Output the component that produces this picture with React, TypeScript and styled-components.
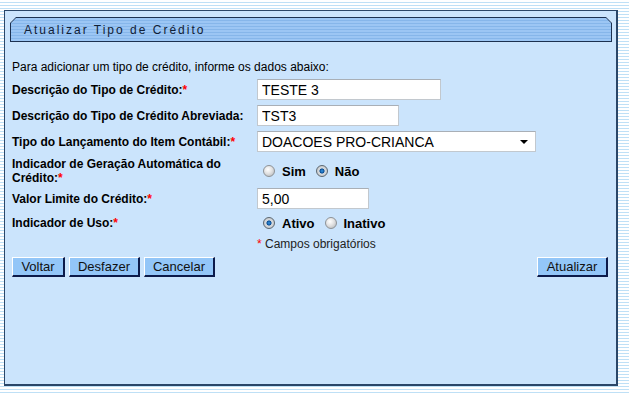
import React from "react";
import styled, { createGlobalStyle } from "styled-components";

const GlobalStyle = createGlobalStyle`
  html, body {
    margin: 0;
    padding: 0;
  }
  body {
    width: 629px;
    height: 394px;
    overflow: hidden;
    font-family: "Liberation Sans", Arial, sans-serif;
    background: repeating-linear-gradient(
      to bottom,
      #ffffff 0px,
      #ffffff 2px,
      #bfe0f6 2px,
      #bfe0f6 3px
    );
  }
`;

const Page = styled.div`
  padding: 10px 0 0 4px;
`;

const Panel = styled.div`
  box-sizing: border-box;
  width: 614px;
  height: 376px;
  background: #cbe4fc;
  border: 1px solid #2a4668;
  border-width: 1px 2px 2px 1px;
  padding: 6px 4px 0 5px;
`;

const TitleBar = styled.div`
  height: 25px;
  padding: 1px;
  box-sizing: border-box;
  background: #1c3150;
  clip-path: polygon(6px 0, calc(100% - 6px) 0, 100% 6px, 100% 100%, 0 100%, 0 6px);
`;

const TitleFill = styled.div`
  height: 100%;
  display: flex;
  align-items: center;
  padding-left: 13px;
  background: repeating-linear-gradient(
    to bottom,
    #9cc6f4 0px,
    #9cc6f4 2px,
    #86b6ea 2px,
    #86b6ea 3px
  );
  clip-path: polygon(5px 0, calc(100% - 5px) 0, 100% 5px, 100% 100%, 0 100%, 0 5px);
`;

const Title = styled.span`
  font-size: 12px;
  letter-spacing: 2px;
  color: #102036;
  margin-top: 1px;
`;

const Form = styled.div`
  display: flex;
  flex-direction: column;
  gap: 5px;
  padding: 18px 0 0 2px;
`;

const Intro = styled.div`
  font-size: 12px;
  line-height: 14px;
  color: #000;
`;

const Row = styled.div<{ h: number }>`
  display: grid;
  grid-template-columns: 245px 1fr;
  align-items: center;
  height: ${(p) => p.h}px;
`;

const Label = styled.div`
  font-size: 12px;
  font-weight: bold;
  line-height: 14px;
  color: #000;
`;

const Req = styled.span`
  color: #ff0000;
`;

const TextInput = styled.input<{ w: number }>`
  box-sizing: border-box;
  width: ${(p) => p.w}px;
  height: 21px;
  border: 1px solid #c2c8ce;
  border-top-color: #a9afb6;
  background: #fff;
  font-family: "Liberation Sans", Arial, sans-serif;
  font-size: 14px;
  color: #000;
  padding: 0 4px;
  outline: none;
`;

const SelectWrap = styled.div`
  position: relative;
  width: 279px;
  height: 21px;

  &::after {
    content: "";
    position: absolute;
    right: 8px;
    top: 9px;
    border-left: 4px solid transparent;
    border-right: 4px solid transparent;
    border-top: 4px solid #000;
    pointer-events: none;
  }
`;

const Select = styled.select`
  appearance: none;
  box-sizing: border-box;
  width: 100%;
  height: 100%;
  border: 1px solid #c2c8ce;
  border-top-color: #a9afb6;
  border-radius: 0;
  background: #fff;
  font-family: "Liberation Sans", Arial, sans-serif;
  font-size: 14px;
  color: #000;
  padding: 0 4px;
  outline: none;
`;

const RadioGroup = styled.div`
  display: flex;
  align-items: center;
  padding-left: 6px;
`;

const RadioLabel = styled.label`
  display: flex;
  align-items: center;
  gap: 7px;
  margin-right: 10px;
  font-size: 13px;
  font-weight: bold;
  color: #000;
`;

const Radio = styled.input`
  appearance: none;
  margin: 0;
  width: 12px;
  height: 12px;
  border-radius: 50%;
  border: 1px solid #8e9296;
  background: radial-gradient(circle at 40% 35%, #ffffff 0%, #e2e2e2 45%, #aeb2b6 100%);
  box-sizing: border-box;

  &:checked {
    border-color: #5d6770;
    background: radial-gradient(circle at 50% 50%, #3a9ae6 0%, #0a4e96 30%, #d8dbde 42%, #b8bcc0 100%);
  }
`;

const Note = styled.div`
  display: grid;
  grid-template-columns: 245px 1fr;
  font-size: 12px;
  line-height: 14px;
  color: #222;
`;

const NoteText = styled.span`
  grid-column: 2;
`;

const ButtonBar = styled.div`
  display: flex;
  align-items: center;
  margin-top: 1px;
  padding-right: 4px;
`;

const ButtonGroup = styled.div`
  display: flex;
  gap: 4px;
`;

const Spacer = styled.div`
  flex: 1;
`;

const Button = styled.button<{ w: number }>`
  box-sizing: border-box;
  width: ${(p) => p.w}px;
  height: 20px;
  padding: 0;
  background: #93c6f8;
  border-style: solid;
  border-width: 1px 2px 2px 1px;
  border-color: #ffffff #0c1a4a #0c1a4a #ffffff;
  font-family: "Liberation Sans", Arial, sans-serif;
  font-size: 13px;
  color: #111;
  line-height: 16px;
`;

export default function App() {
  return (
    <>
      <GlobalStyle />
      <Page>
        <Panel>
          <TitleBar>
            <TitleFill>
              <Title>Atualizar Tipo de Crédito</Title>
            </TitleFill>
          </TitleBar>
          <Form>
            <Intro>Para adicionar um tipo de crédito, informe os dados abaixo:</Intro>
            <Row h={21}>
              <Label>
                Descrição do Tipo de Crédito:<Req>*</Req>
              </Label>
              <TextInput w={184} defaultValue="TESTE 3" />
            </Row>
            <Row h={21}>
              <Label>Descrição do Tipo de Crédito Abreviada:</Label>
              <TextInput w={142} defaultValue="TST3" />
            </Row>
            <Row h={21}>
              <Label>
                Tipo do Lançamento do Item Contábil:<Req>*</Req>
              </Label>
              <SelectWrap>
                <Select defaultValue="1">
                  <option value="1">DOACOES PRO-CRIANCA</option>
                </Select>
              </SelectWrap>
            </Row>
            <Row h={26}>
              <Label>
                Indicador de Geração Automática do
                <br />
                Crédito:<Req>*</Req>
              </Label>
              <RadioGroup>
                <RadioLabel>
                  <Radio type="radio" name="geracao" />
                  Sim
                </RadioLabel>
                <RadioLabel>
                  <Radio type="radio" name="geracao" defaultChecked />
                  Não
                </RadioLabel>
              </RadioGroup>
            </Row>
            <Row h={21}>
              <Label>
                Valor Limite do Crédito:<Req>*</Req>
              </Label>
              <TextInput w={112} defaultValue="5,00" />
            </Row>
            <Row h={18}>
              <Label>
                Indicador de Uso:<Req>*</Req>
              </Label>
              <RadioGroup>
                <RadioLabel>
                  <Radio type="radio" name="uso" defaultChecked />
                  Ativo
                </RadioLabel>
                <RadioLabel>
                  <Radio type="radio" name="uso" />
                  Inativo
                </RadioLabel>
              </RadioGroup>
            </Row>
            <Note>
              <NoteText>
                <Req>*</Req> Campos obrigatórios
              </NoteText>
            </Note>
            <ButtonBar>
              <ButtonGroup>
                <Button w={53}>Voltar</Button>
                <Button w={71}>Desfazer</Button>
                <Button w={71}>Cancelar</Button>
              </ButtonGroup>
              <Spacer />
              <Button w={71}>Atualizar</Button>
            </ButtonBar>
          </Form>
        </Panel>
      </Page>
    </>
  );
}
